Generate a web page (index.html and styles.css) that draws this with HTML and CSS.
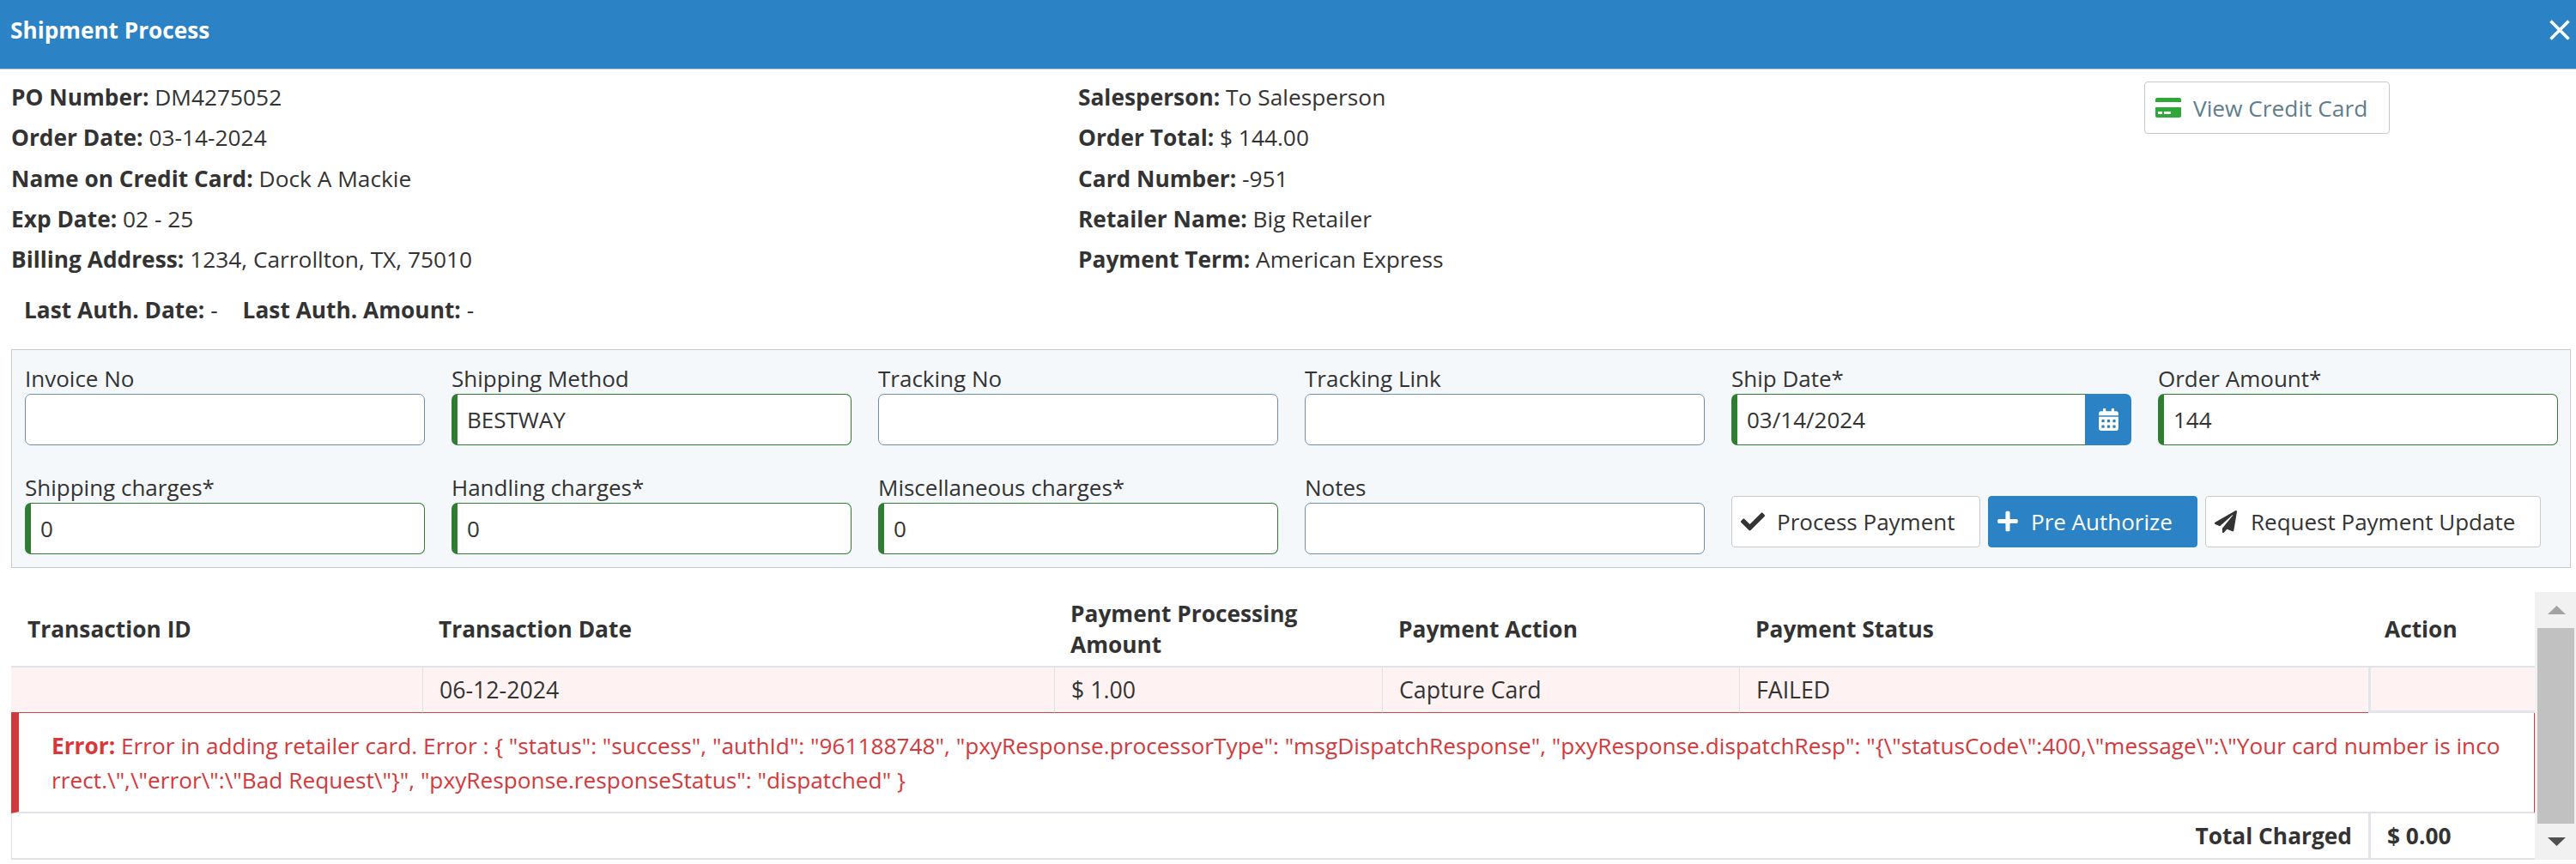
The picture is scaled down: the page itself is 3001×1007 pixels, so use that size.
FILE: index.html
```html
<!DOCTYPE html>
<html lang="en">
<head>
<meta charset="utf-8">
<title>Shipment Process</title>
<link rel="stylesheet" href="styles.css">
</head>
<body>
<header class="modal-head">
  <h1 class="modal-title">Shipment Process</h1>
  <button class="close" aria-label="Close"><svg viewBox="0 0 24 24" width="24" height="24"><path d="M1.5 1.5L22.500 22.500M22.500 1.500L1.500 22.500" stroke="#fff" stroke-width="3.600" fill="none"/></svg></button>
</header>

<section class="info">
  <div class="info-col">
    <p><b>PO Number:</b> DM4275052</p>
    <p><b>Order Date:</b> 03-14-2024</p>
    <p><b>Name on Credit Card:</b> Dock A Mackie</p>
    <p><b>Exp Date:</b> 02 - 25</p>
    <p><b>Billing Address:</b> 1234, Carrollton, TX, 75010</p>
  </div>
  <div class="info-col">
    <p><b>Salesperson:</b> To Salesperson</p>
    <p><b>Order Total:</b> $ 144.00</p>
    <p><b>Card Number:</b> -951</p>
    <p><b>Retailer Name:</b> Big Retailer</p>
    <p><b>Payment Term:</b> American Express</p>
  </div>
  <div class="info-col">
    <button class="card-btn">
      <svg viewBox="0 0 30 23" width="30" height="23"><path fill="#2fa83a" d="M2 0h26a2 2 0 0 1 2 2v3H0V2a2 2 0 0 1 2-2zM0 11h30v10a2 2 0 0 1-2 2H2a2 2 0 0 1-2-2z"/><path fill="#fff" d="M3 16h5v3H3zM10 16h8v3h-8z"/></svg>
      View Credit Card
    </button>
  </div>
</section>

<div class="auth">
  <span><b>Last Auth. Date:</b> -</span>
  <span><b>Last Auth. Amount:</b> -</span>
</div>

<form class="panel">
  <label class="field"><span>Invoice No</span><input class="box" type="text"></label>
  <label class="field"><span>Shipping Method</span><input class="box ok" type="text" value="BESTWAY"></label>
  <label class="field"><span>Tracking No</span><input class="box" type="text"></label>
  <label class="field"><span>Tracking Link</span><input class="box" type="text"></label>
  <label class="field"><span>Ship Date*</span>
    <div class="date">
      <input class="box ok" type="text" value="03/14/2024">
      <i class="date-btn"><svg viewBox="0 0 448 512" width="23" height="26"><path fill="#fff" d="M0 464c0 26.500 21.500 48 48 48h352c26.500 0 48-21.500 48-48V192H0v272zm320-196c0-6.600 5.400-12 12-12h40c6.600 0 12 5.400 12 12v40c0 6.600-5.400 12-12 12h-40c-6.600 0-12-5.400-12-12v-40zm0 128c0-6.600 5.400-12 12-12h40c6.600 0 12 5.400 12 12v40c0 6.600-5.400 12-12 12h-40c-6.600 0-12-5.400-12-12v-40zM192 268c0-6.600 5.400-12 12-12h40c6.600 0 12 5.400 12 12v40c0 6.600-5.400 12-12 12h-40c-6.600 0-12-5.400-12-12v-40zm0 128c0-6.600 5.400-12 12-12h40c6.600 0 12 5.400 12 12v40c0 6.600-5.400 12-12 12h-40c-6.600 0-12-5.400-12-12v-40zM64 268c0-6.600 5.400-12 12-12h40c6.600 0 12 5.400 12 12v40c0 6.600-5.400 12-12 12H76c-6.600 0-12-5.400-12-12v-40zm0 128c0-6.600 5.400-12 12-12h40c6.600 0 12 5.400 12 12v40c0 6.600-5.400 12-12 12H76c-6.600 0-12-5.400-12-12v-40zM400 64h-48V16c0-8.800-7.200-16-16-16h-32c-8.800 0-16 7.200-16 16v48H160V16c0-8.800-7.200-16-16-16h-32c-8.800 0-16 7.200-16 16v48H48C21.500 64 0 85.500 0 112v48h448v-48c0-26.500-21.500-48-48-48z"/></svg></i>
    </div>
  </label>
  <label class="field"><span>Order Amount*</span><input class="box ok" type="text" value="144"></label>

  <label class="field"><span>Shipping charges*</span><input class="box ok" type="text" value="0"></label>
  <label class="field"><span>Handling charges*</span><input class="box ok" type="text" value="0"></label>
  <label class="field"><span>Miscellaneous charges*</span><input class="box ok" type="text" value="0"></label>
  <label class="field"><span>Notes</span><input class="box" type="text"></label>
  <div class="actions">
    <button type="button" class="btn btn-process"><svg viewBox="0 0 512 512" width="28" height="28"><path fill="#333" d="M173.898 439.404l-166.400-166.400c-9.997-9.997-9.997-26.206 0-36.204l36.203-36.204c9.997-9.998 26.207-9.998 36.204 0L192 312.690 432.095 72.596c9.997-9.997 26.207-9.997 36.204 0l36.203 36.204c9.997 9.997 9.997 26.206 0 36.204l-294.400 294.401c-9.998 9.997-26.207 9.997-36.204-.001z"/></svg>Process Payment</button>
    <button type="button" class="btn btn-pre"><svg viewBox="0 0 448 512" width="24" height="27"><path fill="#fff" d="M416 208H272V64c0-17.670-14.330-32-32-32h-32c-17.670 0-32 14.330-32 32v144H32c-17.670 0-32 14.330-32 32v32c0 17.670 14.330 32 32 32h144v144c0 17.670 14.330 32 32 32h32c17.670 0 32-14.330 32-32V304h144c17.670 0 32-14.330 32-32v-32c0-17.670-14.330-32-32-32z"/></svg>Pre Authorize</button>
    <button type="button" class="btn btn-req"><svg viewBox="0 0 512 512" width="26" height="26"><path fill="#333" d="M476 3.200L12.500 270.600c-18.100 10.400-15.800 35.600 2.200 43.200L121 358.400l287.300-253.200c5.500-4.900 13.300 2.600 8.600 8.300L176 407v80.500c0 23.600 28.500 32.900 42.500 15.800L282 426l124.600 52.200c14.200 6 30.400-2.900 33-18.200l72-432C515 7.800 493.300-6.800 476 3.200z"/></svg>Request Payment Update</button>
  </div>
</form>

<section class="grid-wrap">
  <table class="tx">
    <colgroup>
      <col class="c1"><col class="c2"><col class="c3"><col class="c4"><col class="c5"><col class="c6">
    </colgroup>
    <thead>
      <tr>
        <th>Transaction ID</th>
        <th>Transaction Date</th>
        <th>Payment Processing Amount</th>
        <th>Payment Action</th>
        <th>Payment Status</th>
        <th>Action</th>
      </tr>
    </thead>
    <tbody>
      <tr class="failed">
        <td></td>
        <td>06-12-2024</td>
        <td>$ 1.00</td>
        <td>Capture Card</td>
        <td>FAILED</td>
        <td class="act"></td>
      </tr>
      <tr class="err-row">
        <td colspan="6"><div class="err"><b>Error:</b> Error in adding retailer card. Error : { "status": "success", "authId": "961188748", "pxyResponse.processorType": "msgDispatchResponse", "pxyResponse.dispatchResp": "{\"statusCode\":400,\"message\":\"Your card number is incorrect.\",\"error\":\"Bad Request\"}", "pxyResponse.responseStatus": "dispatched" }</div></td>
      </tr>
      <tr class="total">
        <td colspan="5">Total Charged</td>
        <td class="act">$ 0.00</td>
      </tr>
    </tbody>
  </table>
  <div class="scrollbar" aria-hidden="true">
    <div class="arrow"><svg viewBox="0 0 21 10" width="21" height="10"><path fill="#a3a3a3" d="M10.500 0L21 10H0z"/></svg></div>
    <div class="thumb"></div>
    <div class="arrow"><svg viewBox="0 0 21 10" width="21" height="10"><path fill="#505050" d="M0 0h21L10.500 10z"/></svg></div>
  </div>
</section>
</body>
</html>
```
FILE: styles.css
```css
* { box-sizing: border-box; }
html, body { margin: 0; padding: 0; }
body {
  width: 3001px;
  height: 1007px;
  overflow: hidden;
  background: #fff;
  color: #333;
  font-family: "Open Sans", sans-serif;
  font-size: 26.3px;
}
b { font-weight: 700; }
button, input { font-family: inherit; font-size: inherit; }

.modal-head {
  height: 81px;
  background: #2b82c4;
  border-bottom: 1px solid #c8c8c8;
  display: flex;
  align-items: flex-start;
  justify-content: space-between;
  padding: 0 7px 0 12px;
}
.modal-title {
  margin: 17px 0 0;
  font-size: 26.2px;
  line-height: 36px;
  font-weight: 700;
  color: #fff;
}
.close {
  margin-top: 23px;
  padding: 0;
  border: 0;
  background: none;
  display: flex;
}

.info {
  display: grid;
  grid-template-columns: 1243px 1242px 1fr;
  padding: 9px 0 0 13px;
}
.info p {
  margin: 0;
  line-height: 47.3px;
  white-space: nowrap;
}
.card-btn {
  width: 286px;
  height: 61px;
  margin-top: 5px;
  padding: 0 0 0 12px;
  display: flex;
  align-items: center;
  gap: 14px;
  background: #fff;
  border: 1px solid #c6c8ca;
  border-radius: 4px;
  color: #607d8b;
}

.auth {
  display: flex;
  gap: 29px;
  margin-top: 12px;
  padding-left: 28px;
  line-height: 47px;
}

.panel {
  margin: 21.500px 6px 0 13px;
  height: 255px;
  padding: 17px 15px 15px;
  background: #f5f8fb;
  border: 1px solid #c8cacc;
  display: grid;
  grid-template-columns: repeat(6, 466px);
  column-gap: 31px;
  row-gap: 33px;
  align-content: start;
  font-size: 26px;
}
.field { display: block; min-width: 0; }
.field > span {
  display: block;
  line-height: 32px;
  margin-bottom: 2px;
  white-space: nowrap;
}
.box {
  display: block;
  width: 100%;
  height: 60px;
  padding: 0 12px;
  background: #fff;
  border: 1px solid #6f8fa8;
  border-radius: 7px;
  color: #333;
  outline: 0;
}
.box.ok {
  border-color: #2e7d32;
  border-left-width: 7px;
  padding-left: 11px;
}
.date { display: flex; }
.date .box {
  flex: 1;
  min-width: 0;
  border-right: 0;
  border-radius: 7px 0 0 7px;
}
.date-btn {
  width: 54px;
  height: 60px;
  background: #2b82c4;
  border-radius: 0 7px 7px 0;
  display: flex;
  align-items: center;
  justify-content: center;
}

.actions {
  grid-column: span 2;
  align-self: end;
  margin-bottom: 8px;
  display: flex;
  gap: 9px;
}
.btn {
  height: 60px;
  display: flex;
  align-items: center;
  background: #fff;
  border: 1px solid #c8cacc;
  border-radius: 4px;
  color: #333;
  padding: 0 0 0 10px;
  white-space: nowrap;
}
.btn-process { width: 290px; gap: 14px; }
.btn-pre {
  width: 244px;
  gap: 15px;
  background: #2b82c4;
  border-color: #2b82c4;
  color: #fff;
}
.btn-req { width: 391px; gap: 16px; }

.grid-wrap {
  display: flex;
  margin: 28px 0 0 13px;
  height: 312px;
}
.tx {
  width: 2940px;
  height: 312px;
  table-layout: fixed;
  border-collapse: separate;
  border-spacing: 0;
  font-size: 26.7px;
}
.c1 { width: 479px; }
.c2 { width: 736px; }
.c3 { width: 382px; }
.c4 { width: 416px; }
.c5 { width: 733px; }
.c6 { width: 194px; }

.tx th, .tx td { padding: 0 19px; text-align: left; }
.tx th {
  height: 88px;
  font-size: 26.3px;
  font-weight: 700;
  line-height: 36px;
  border-bottom: 2px solid #e0e2e7;
  vertical-align: middle;
}
.failed td {
  height: 53px;
  background: #fff2f2;
  border-left: 1px solid #e2e2e6;
  border-bottom: 1px solid #c9484c;
}
.failed td:first-child { border-left: 0; }
.failed td.act {
  border-left: 3px solid #e2e6ea;
  border-bottom: 3px solid #e2e6ea;
}
.err-row td {
  height: 117px;
  padding: 0;
  border-left: 9px solid #d2393d;
  border-right: 1px solid #d2393d;
  border-bottom: 2px solid #e0e2e7;
}
.err {
  padding: 2px 34px 0 38px;
  font-size: 26.26px;
  line-height: 40px;
  color: #d6383c;
  word-break: break-all;
}
.total td {
  height: 54px;
  font-size: 26.3px;
  font-weight: 700;
  text-align: right;
  border-left: 1px solid #e0e2e7;
  border-bottom: 2px solid #e0e2e7;
}
.total td.act {
  text-align: left;
  border-left: 3px solid #e2e6ea;
}

.scrollbar {
  width: 48px;
  height: 312px;
  padding-left: 3px;
  background: #f1f1f1;
  display: flex;
  flex-direction: column;
}
.arrow {
  height: 42px;
  display: flex;
  align-items: center;
  justify-content: center;
}
.thumb {
  flex: 1;
  margin-right: 2px;
  background: #c1c1c1;
}
```
